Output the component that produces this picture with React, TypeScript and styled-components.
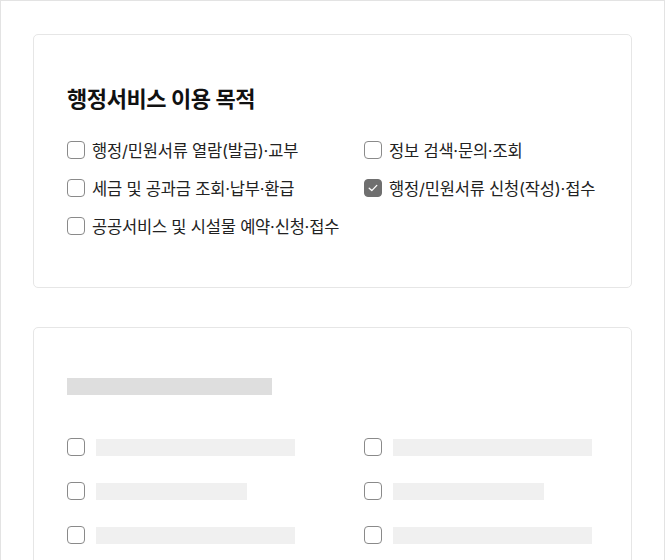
import styled, { createGlobalStyle } from 'styled-components';

const GlobalStyle = createGlobalStyle`
  html, body {
    margin: 0;
    padding: 0;
    background: #fff;
  }

  body {
    font-family: "Inter", "Noto Sans CJK KR", "Noto Sans", sans-serif;
    color: #222;
  }
`;

const Frame = styled.div`
  box-sizing: border-box;
  width: 665px;
  height: 560px;
  border: 1px solid #e3e3e3;
  border-bottom: none;
  padding: 33px 32px 0;
  overflow: hidden;
`;

const Card = styled.section`
  border: 1px solid #e6e6e6;
  border-radius: 5px;
  padding: 48px 33px 48px;

  & + & {
    margin-top: 39px;
  }
`;

const Title = styled.h2`
  margin: 0 0 22px;
  font-size: 22px;
  font-weight: 700;
  line-height: 32px;
  letter-spacing: -0.4px;
  color: #111;
`;

const TitleBone = styled.div`
  width: 205px;
  height: 17px;
  margin: 2px 0 39px;
  background: #dedede;
`;

const Options = styled.div<{ $rowGap: number }>`
  display: grid;
  grid-template-columns: 297px 1fr;
  row-gap: ${(p) => p.$rowGap}px;
`;

const Option = styled.label<{ $gap: number }>`
  display: flex;
  align-items: center;
  gap: ${(p) => p.$gap}px;
  height: 26px;
  font-size: 16.5px;
  letter-spacing: -0.2px;
  color: #222;
  white-space: nowrap;
`;

const Box = styled.span<{ $checked?: boolean }>`
  box-sizing: border-box;
  flex: none;
  display: flex;
  align-items: center;
  justify-content: center;
  width: 18px;
  height: 18px;
  border-radius: 4px;
  border: 1px solid ${(p) => (p.$checked ? '#6f6f6f' : '#8a8a8a')};
  background: ${(p) => (p.$checked ? '#6f6f6f' : '#fff')};
`;

const Bone = styled.span<{ $short?: boolean }>`
  display: block;
  width: ${(p) => (p.$short ? 151 : 199)}px;
  height: 17px;
  background: #f0f0f0;
`;

const Check = () => (
  <svg width="10" height="8" viewBox="0 0 10 8" fill="none">
    <path d="M1.2 4.2 3.8 6.6 8.8 1.4" stroke="#fff" strokeWidth="1.3" strokeLinecap="round" strokeLinejoin="round" />
  </svg>
);

const purposes = [
  { label: '행정/민원서류 열람(발급)·교부', checked: false },
  { label: '정보 검색·문의·조회', checked: false },
  { label: '세금 및 공과금 조회·납부·환급', checked: false },
  { label: '행정/민원서류 신청(작성)·접수', checked: true },
  { label: '공공서비스 및 시설물 예약·신청·접수', checked: false },
];

const bones = [false, false, true, true, false, false];

export default function App() {
  return (
    <>
      <GlobalStyle />
      <Frame>
        <Card>
          <Title>행정서비스 이용 목적</Title>
          <Options $rowGap={12}>
            {purposes.map((item) => (
              <Option key={item.label} $gap={7}>
                <Box $checked={item.checked}>{item.checked && <Check />}</Box>
                {item.label}
              </Option>
            ))}
          </Options>
        </Card>
        <Card>
          <TitleBone />
          <Options $rowGap={18}>
            {bones.map((short, i) => (
              <Option key={i} $gap={11}>
                <Box />
                <Bone $short={short} />
              </Option>
            ))}
          </Options>
        </Card>
      </Frame>
    </>
  );
}
